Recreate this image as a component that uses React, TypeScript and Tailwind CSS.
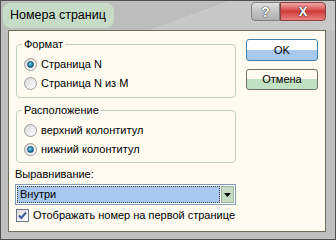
const font = { fontFamily: '"Liberation Sans", Arial, sans-serif' };

const Radio = ({ checked, label }: { checked?: boolean; label: string }) => (
  <div className="flex items-center h-[19px] pl-[7px]">
    <span className="w-[13px] h-[13px] rounded-full border border-[#9a9a9a] bg-gradient-to-br from-[#d8d8d8] to-[#ffffff] flex items-center justify-center">
      {checked && (
        <span className="w-[7px] h-[7px] rounded-full bg-[radial-gradient(circle_at_40%_35%,#7fd0f0,#0a6f9a_70%)] border border-[#1e5070]" />
      )}
    </span>
    <span className="ml-[4px] text-[11px] leading-[13px] text-black">{label}</span>
  </div>
);

const Group = ({ title, className, children }: { title: string; className?: string; children: React.ReactNode }) => (
  <fieldset className={`border border-[#bcd0c0] rounded-[4px] px-0 pt-[4px] ${className ?? ""}`}>
    <legend className="ml-[5px] px-[2px] text-[11px] leading-[13px] text-black">{title}</legend>
    {children}
  </fieldset>
);

export default function App() {
  return (
    <div style={font} className="w-[336px] h-[240px] bg-[#c0c0c0] border border-[#505050] overflow-hidden flex flex-col">
      {/* title bar */}
      <div className="h-[29px] flex items-start relative bg-[linear-gradient(160deg,#bdbdbd_55%,#c8c8c8_55%)]">
        <div className="mt-[2px] ml-[2px] h-[25px] rounded-[8px] bg-[#c6dcc6] flex items-center pl-[7px] pr-[8px]">
          <span className="text-[12.5px] text-black leading-[15px] whitespace-nowrap">Номера страниц</span>
        </div>
        <div className="ml-auto mr-[9px] mt-[1px] flex">
          <div className="w-[29px] h-[19px] rounded-tl-[4px] rounded-bl-[4px] border border-[#808080] bg-gradient-to-b from-[#e0e0e0] via-[#c4c4c4] to-[#b0b0b0] flex items-center justify-center">
            <span className="text-[14px] font-bold text-white leading-[14px] [text-shadow:0_0_1px_#404040,0_0_1px_#404040,0_0_1px_#404040]">?</span>
          </div>
          <div className="w-[46px] h-[19px] rounded-tr-[4px] rounded-br-[4px] border border-[#8a4040] bg-gradient-to-b from-[#f0a8a8] via-[#d03838] to-[#e88080] flex items-center justify-center">
            <span className="text-[13px] font-bold text-white leading-[13px] [text-shadow:0_0_1px_#303030,0_0_1px_#303030,0_0_1px_#303030]">X</span>
          </div>
        </div>
      </div>

      {/* client area */}
      <div className="ml-[7px] mr-[9px] h-[202px] bg-[#fffbf0] border border-[#6e6e58] flex pl-[6px] pt-[7px]">
        <div className="w-[221px] flex flex-col">
          <Group title="Формат" className="ml-[1px] h-[60px]">
            <Radio checked label="Страница N" />
            <Radio label="Страница N из M" />
          </Group>
          <Group title="Расположение" className="ml-[1px] mt-[6px] h-[59px]">
            <Radio label="верхний колонтитул" />
            <Radio checked label="нижний колонтитул" />
          </Group>
          <div className="mt-[5px] text-[11px] leading-[13px] text-black">Выравнивание:</div>
          <div className="mt-[3px] h-[21px] border border-[#7f9db9] bg-white p-[1px] flex">
            <div className="flex-1 bg-[#a8c8f0] border border-dotted border-[#404040] flex items-center pl-[2px]">
              <span className="text-[11px] leading-[13px] text-black">Внутри</span>
            </div>
            <div className="w-[13px] ml-[1px] bg-[#c4dcc4] border border-[#a0b4a0] flex items-center justify-center">
              <svg width="7" height="4" viewBox="0 0 7 4">
                <path d="M0 0h7L3.5 4z" fill="#000" />
              </svg>
            </div>
          </div>
          <div className="mt-[4px] flex items-center pl-[1px]">
            <span className="w-[13px] h-[13px] border border-[#6a7a8a] bg-gradient-to-br from-[#dcdcdc] to-white flex items-center justify-center">
              <svg width="9" height="9" viewBox="0 0 9 9">
                <path d="M1 4.5l2.3 2.5L8 1.5" stroke="#3a5a9a" strokeWidth="2" fill="none" />
              </svg>
            </span>
            <span className="ml-[4px] text-[11px] leading-[13px] text-black">Отображать номер на первой странице</span>
          </div>
        </div>

        <div className="ml-[10px] w-[72px] pt-[1px] flex flex-col">
          <button className="h-[22px] rounded-[3px] border border-[#3c7fb1] bg-[linear-gradient(to_bottom,#ffffff_50%,#a8c8ec_50%)] text-[11px] text-black">
            OK
          </button>
          <button className="mt-[8px] h-[21px] rounded-[3px] border border-[#707070] bg-[linear-gradient(to_bottom,#fffbf0_50%,#c2e0c2_50%)] text-[11px] text-black">
            Отмена
          </button>
        </div>
      </div>
    </div>
  );
}
